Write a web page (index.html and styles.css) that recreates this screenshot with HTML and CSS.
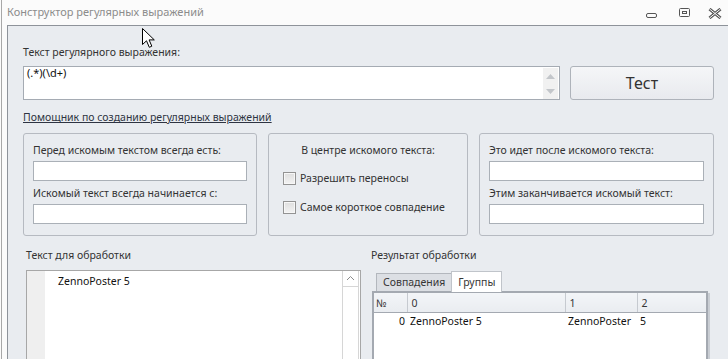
FILE: index.html
```html
<!DOCTYPE html>
<html lang="ru">
<head>
  <meta charset="UTF-8">
  <title>Конструктор регулярных выражений</title>
  <link rel="stylesheet" href="styles.css">
</head>
<body>
  <div class="window">
    <div class="titlebar">
      <span class="title">Конструктор регулярных выражений</span>
      <div class="winbtns">
        <svg class="wb-min" width="13" height="7" viewBox="0 0 13 7"><rect x="1.5" y="1.5" width="10" height="4" rx="1.5" fill="none" stroke="#555" stroke-width="1"/></svg>
        <svg class="wb-max" width="13" height="10" viewBox="0 0 13 10"><rect x="1.5" y="0.5" width="10" height="8" rx="1" fill="none" stroke="#555"/><rect x="4.5" y="3.5" width="4" height="2" fill="none" stroke="#555"/></svg>
        <svg class="wb-close" width="14" height="11" viewBox="0 0 14 11"><path d="M1.5 1 L12.5 10 M12.5 1 L1.5 10" stroke="#555" stroke-width="3"/><path d="M1.5 1 L12.5 10 M12.5 1 L1.5 10" stroke="#fbfbfb" stroke-width="1"/></svg>
      </div>
    </div>

    <div class="main">
      <div class="label">Текст регулярного выражения:</div>
      <div class="regex-row">
        <div class="regex-input">
          <span class="regex-text">(.*)(\d+)</span>
          <div class="spin">
            <svg width="15" height="31" viewBox="0 0 15 31"><path d="M3 11 L7.5 6 L12 11 Z" fill="#c3c6ca"/><path d="M3 21 L7.5 26 L12 21 Z" fill="#c3c6ca"/></svg>
          </div>
        </div>
        <button class="test-btn">Тест</button>
      </div>
      <a class="helper" href="#">Помощник по созданию регулярных выражений</a>

      <div class="groups">
        <div class="group side first">
          <div class="glabel">Перед искомым текстом всегда есть:</div>
          <div class="field"></div>
          <div class="glabel next">Искомый текст всегда начинается с:</div>
          <div class="field"></div>
        </div>
        <div class="group center">
          <div class="glabel centered">В центре искомого текста:</div>
          <label class="check first-check"><span class="box"></span>Разрешить переносы</label>
          <label class="check"><span class="box"></span>Самое короткое совпадение</label>
        </div>
        <div class="group side last">
          <div class="glabel">Это идет после искомого текста:</div>
          <div class="field"></div>
          <div class="glabel next">Этим заканчивается искомый текст:</div>
          <div class="field"></div>
        </div>
      </div>

      <div class="bottom">
        <div class="source">
          <div class="label">Текст для обработки</div>
          <div class="editor">
            <div class="gutter"></div>
            <div class="code">ZennoPoster 5</div>
            <div class="vscroll">
              <div class="up"><svg width="15" height="15" viewBox="0 0 15 15"><path d="M4 9 L7.5 5.5 L11 9" fill="none" stroke="#8a8a8a" stroke-width="1"/></svg></div>
            </div>
          </div>
        </div>
        <div class="result">
          <div class="label">Результат обработки</div>
          <div class="tabs">
            <span class="tab">Совпадения</span>
            <span class="tab active">Группы</span>
          </div>
          <table class="grid">
            <colgroup><col class="c-num"><col class="c0"><col class="c1"><col></colgroup>
            <thead>
              <tr><th>№</th><th>0</th><th>1</th><th>2</th></tr>
            </thead>
            <tbody>
              <tr><td class="num">0</td><td>ZennoPoster 5</td><td>ZennoPoster</td><td>5</td></tr>
              <tr class="filler"><td></td><td></td><td></td><td></td></tr>
            </tbody>
          </table>
        </div>
      </div>
    </div>

    <svg class="cursor" width="14" height="21" viewBox="0 0 14 21"><path d="M0.5 0.5 L0.5 16.5 L4.5 12.8 L7.3 19.3 L9.8 18.2 L7.1 11.9 L12.3 11.9 Z" fill="#fff" stroke="#000" stroke-width="1" stroke-linejoin="miter"/></svg>
  </div>
</body>
</html>
```

FILE: styles.css
```css
body {margin:0; width:728px; height:359px; overflow:hidden; background:#fbfbfb; font-family:"Noto Sans", "Liberation Sans", sans-serif; font-size:10.5px; color:#363636;}
.window {position:relative; margin-left:1px; border-left:1px solid #a8a8a8; height:359px; box-sizing:border-box; overflow:hidden;}

/* title bar */
.titlebar {height:25px; display:flex; align-items:center; justify-content:space-between; padding-left:5px; background:#fbfbfb;}
.title {color:#8c8c8c; font-size:11px; line-height:15px; margin-top:-2px;}
.winbtns {display:flex; align-items:center; height:25px;}
.wb-min {margin-top:6px; margin-right:20px;}
.wb-max {margin-top:1px; margin-right:17px;}
.wb-close {margin-top:2px; margin-right:6px;}

/* main panel */
.main {margin-left:5px; border-left:1px solid #8e939a; border-top:1px solid #8e939a; background:#e9ecf0; padding:18px 14px 0 15px; height:334px; box-sizing:border-box; overflow:hidden;}
.label {line-height:16px; color:#333;}

.regex-row {display:flex; margin-top:6px; height:34px;}
.regex-input {width:537px; box-sizing:border-box; border:1px solid #a5abb3; background:#fff; display:flex; justify-content:space-between;}
.regex-text {padding:0 3px; line-height:12px; color:#111; font-size:11px;}
.spin {width:15px; background:#f1f1f1; margin:1px 1px 0 0;}
.spin svg {display:block;}
.test-btn {margin-left:10px; width:144px; box-sizing:border-box; border:1px solid #aeb3ba; border-radius:3px; background:linear-gradient(#f5f6f8,#e8eaee); font-family:inherit; font-size:16px; color:#333; padding:0;}

.helper {display:block; margin-top:10px; line-height:15px; color:#2e3442; text-decoration:underline; width:max-content;}

/* option groups */
.groups {display:flex; gap:11px; margin-top:8px;}
.group {height:103px; box-sizing:border-box; border:1px solid #b6bac1; border-radius:3px; padding:9px;}
.group.first {width:234px;}
.group.center {width:200px;}
.group.last {width:235px;}
.glabel {line-height:15px; color:#333;}
.glabel.next {margin-top:5px;}
.glabel.centered {text-align:center;}
.field {margin-top:3px; height:20px; box-sizing:border-box; border:1px solid #aab0b7; background:#fff;}
.check {display:flex; align-items:center; gap:4px; line-height:15px; padding-left:5px; margin-top:14px; color:#333;}
.check.first-check {margin-top:13px;}
.box {width:13px; height:13px; box-sizing:border-box; border:1px solid #939393; background:linear-gradient(#dedede,#f3f3f3); box-shadow:inset 0 0 0 1px #f7f7f7;}

/* bottom area */
.bottom {display:flex; margin-top:12px; padding-left:3px;}
.source {width:335px; margin-right:10px;}
.source .label, .result .label {line-height:15px;}
.editor {margin-top:7px; height:100px; border:1px solid #a7a7a7; background:#fff; display:flex;}
.gutter {width:18px; background:#efefef;}
.code {flex:1; padding:3px 0 0 13px; line-height:15px; color:#111;}
.vscroll {width:15px; border-left:1px solid #d6d6d6; border-right:1px solid #d6d6d6; margin-right:1px;}
.up {height:15px; border-bottom:1px solid #d6d6d6;}
.up svg {display:block;}

.result {flex:1;}
.tabs {display:flex; align-items:flex-end; height:21px; margin-top:7px; padding-left:5px;}
.tab {height:18px; box-sizing:border-box; line-height:17px; padding:0 6px; border:1px solid #b3b7bd; border-bottom:none; background:#dcdfe4; color:#363636;}
.tab.active {height:21px; line-height:20px; background:#fff; border-color:#c0c4ca; margin-left:-1px; padding:0 6px; position:relative; z-index:1; margin-bottom:-1px;}
.grid {margin-left:1px; width:336px; border-collapse:collapse; border:2px solid #a4a9b1; background:#fff; box-shadow:2px 2px 0 #c9cdd3; table-layout:fixed;}
.c-num {width:34px;}
.c0 {width:158px;}
.c1 {width:72px;}
.grid th {height:19px; padding:0 0 0 4px; text-align:left; font-weight:normal; background:linear-gradient(#f3f5f8,#e9ecf0); border-left:1px solid #c6cad0; border-bottom:1px solid #a4a9b1; color:#363636;}
.grid th:first-child {border-left:none; padding-left:2px;}
.grid td {height:15px; padding:0 0 2px 3px; color:#111; white-space:nowrap;}
.grid td.num {text-align:right; padding:0 2px 2px 0;}
.grid tr.filler td {height:40px;}

.cursor {position:absolute; left:140px; top:28px;}
```
